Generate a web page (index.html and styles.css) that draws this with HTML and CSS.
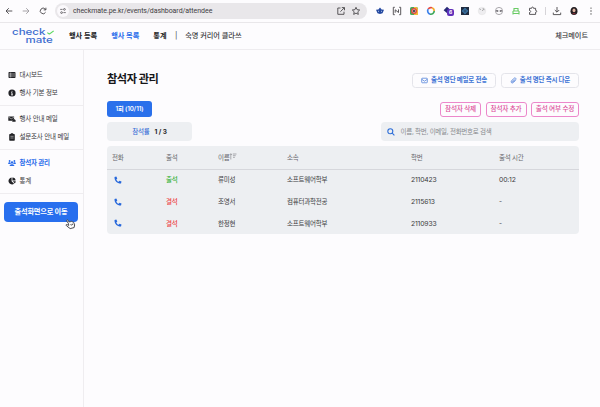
FILE: index.html
```html
<!DOCTYPE html>
<html lang="ko">
<head>
<meta charset="utf-8">
<title>참석자 관리</title>
<link rel="stylesheet" href="styles.css">
</head>
<body>
<div class="browser">
  <div class="controls">
    <svg viewBox="0 0 10 10"><path d="M8.3 5H2M4.8 2.2 2 5l2.8 2.8"/></svg>
    <svg class="muted" viewBox="0 0 10 10"><path d="M1.7 5H8M5.2 2.2 8 5 5.2 7.8"/></svg>
    <svg viewBox="0 0 10 10"><path d="M7.6 6.2A2.8 2.8 0 1 1 7.2 3.1L7.8 3.8M7.9 1.7v2.2H5.7"/></svg>
  </div>
  <div class="address">
    <span class="site"><svg viewBox="0 0 10 10"><path d="M1.5 3h3M5.5 7h3"/><circle cx="6.8" cy="3" r="1.1"/><circle cx="3.2" cy="7" r="1.1"/></svg></span>
    <span class="url">checkmate.pe.kr/events/dashboard/attendee</span>
    <svg viewBox="0 0 10 10"><path d="M4.5 2H1.8v6.3H8V5.7M5.8 1.6h2.7v2.7M8.3 1.8 4.4 5.7"/></svg>
    <svg viewBox="0 0 10 10"><path d="m5 1.3 1.1 2.4 2.6.3-1.9 1.8.5 2.6L5 7.1 2.7 8.4l.5-2.6L1.3 4l2.6-.3z"/></svg>
  </div>
  <div class="extensions">
    <svg viewBox="0 0 10 10"><path fill="#2448a0" stroke="none" d="m5 1.5 1.6 2 2.4.3-1.5 3.4-2.5.8-2.5-.8L1 3.8l2.4-.3z"/><path stroke="#bcd5f2" d="M3 5.3h1M6 5.3h1"/></svg>
    <svg viewBox="0 0 10 10"><path d="M2.8 1.3H1.3v7.4h1.5M7.2 1.3h1.5v7.4H7.2M3.2 6.7V3.8l3.3 2.7V3.4"/></svg>
    <svg viewBox="0 0 10 10"><rect x="1" y="1" width="8" height="8" rx="1.5" fill="#48a75b" stroke="none"/><path fill="#f1b93b" stroke="none" d="M5 1h2.5L9 2.5V9H5z"/><circle cx="5" cy="5" r="3" fill="#e5483f" stroke="none"/><circle cx="5" cy="5" r="1.5" fill="#392e36" stroke="#eee" stroke-width=".5"/></svg>
    <svg class="ring" viewBox="0 0 10 10"><path stroke="#e84a42" d="M2.2 3.1A3.3 3.3 0 0 1 6 1.8"/><path stroke="#f3ad31" d="M6 1.8A3.3 3.3 0 0 1 8.2 5"/><path stroke="#3da75b" d="M8.2 5A3.3 3.3 0 0 1 4 8.1"/><path stroke="#3e82ea" d="M4 8.1a3.3 3.3 0 0 1-1.8-5"/></svg>
    <span class="badged"><svg viewBox="0 0 10 10"><path fill="#272a76" stroke="none" d="m4 .8 3.8 3.4L4.5 7.6.6 4.3z"/></svg><b>6</b></span>
    <svg viewBox="0 0 10 10"><rect x="1" y="1" width="8" height="8" fill="#202c40" stroke="none"/><ellipse cx="5" cy="5" rx="3" ry="1.2" stroke="#438bc5" stroke-width=".7"/><ellipse cx="5" cy="5" rx="1.2" ry="3" stroke="#438bc5" stroke-width=".7"/></svg>
    <svg viewBox="0 0 10 10"><circle cx="5" cy="5" r="3.8" fill="#eeedf0" stroke="#ddd" stroke-width=".4"/><path stroke="#aaa" d="m2.2 2.7 1.8 1M5 5l2-2M5.5 2.8H7v1.5"/></svg>
    <svg viewBox="0 0 10 10"><circle cx="5" cy="5" r="3.6" stroke="#86848a" stroke-width=".7"/><path stroke="#77757a" d="M2 4.5h2v1H2.3M8 4.5H6v1h1.7"/></svg>
    <svg viewBox="0 0 10 10"><path stroke="#6acb65" stroke-width="1.1" d="M2.5 2.5h5M2 5h6M1.5 7.5h7M3 2v3M7 2v3M2 5v3.5M8 5v3.5"/></svg>
    <svg viewBox="0 0 10 10"><path d="M1.5 2.3h2.1c-.3-1.6 2.2-1.6 1.9 0h2.1v2.1c1.5-.3 1.5 2.1 0 1.8v2.2H1.5V6.5c1.6.2 1.6-2.2 0-2z"/></svg>
    <i></i>
    <svg viewBox="0 0 10 10"><path d="M5 1v5M2.8 4 5 6.2 7.2 4M1.3 6.6v2h7.4v-2"/></svg>
    <svg viewBox="0 0 10 10"><path fill="#211c20" stroke="none" d="M5 1c2.4 0 3.5 1.7 3.5 4.2S7.3 9 5 9 1.5 7.7 1.5 5.2 2.7 1 5 1z"/><ellipse cx="5" cy="4.4" rx="1.5" ry="1.8" fill="#dfb3a1" stroke="none"/><path stroke="#a3323f" d="M3.6 7.7h2.8"/></svg>
    <svg viewBox="0 0 10 10"><g fill="#444" stroke="none"><circle cx="5" cy="2.1" r=".7"/><circle cx="5" cy="5" r=".7"/><circle cx="5" cy="7.9" r=".7"/></g></svg>
  </div>
</div>

<header class="header">
  <div class="logo">
    <span>check<svg viewBox="0 0 8 6"><path d="m.8 3.2 2.1 1.9L7.4.8"/></svg></span>
    <span class="mate">mate</span>
  </div>
  <nav><b>행사 등록</b><b class="active">행사 목록</b><b>통계</b></nav>
  <span class="bar">|</span>
  <span class="event">숙명 커리어 클라쓰</span>
  <span class="account">체크메이트</span>
</header>

<div class="layout">
  <aside class="sidebar">
    <ul>
      <li><svg viewBox="0 0 8 8"><rect x=".5" y="1" width="7" height="6" rx=".8"/><path class="cut" d="M2.7 1.5v5M1 3h6M1 5h6"/></svg>대시보드</li>
      <li><svg viewBox="0 0 8 8"><circle cx="4" cy="4" r="3.6"/><path class="cut info" d="M3.3 3.6H4v2.2M3.2 5.9h1.7M4 1.9v.8"/></svg>행사 기본 정보</li>
    </ul>
    <ul>
      <li><svg viewBox="0 0 8 8"><path d="M.3 1.5h5.8v2.1L4 5.8H.3zM4.7 4.2h1.9l1 1.1v1.4H4.2z"/><path class="cut" d="m.5 2.2 2.8 1.6L6 2.2"/></svg>행사 안내 메일</li>
      <li><svg viewBox="0 0 8 8"><rect x="1.2" y="1" width="5.6" height="6.7" rx=".8"/><rect x="2.7" y=".2" width="2.6" height="1.5" rx=".5"/><path class="cut" d="M2.4 3.3h3.2M2.4 5h3.2"/></svg>설문조사 안내 메일</li>
    </ul>
    <ul>
      <li class="active"><svg viewBox="0 0 8 8"><circle cx="1.6" cy="2" r=".9"/><circle cx="6.4" cy="2" r=".9"/><circle cx="4" cy="3.4" r="1.2"/><path d="M.2 4.5c0-1.5 1.7-1.5 2.2-.8.1 1 .6 1.1.9 1.2H.2zM7.8 4.5c0-1.5-1.7-1.5-2.2-.8-.1 1-.6 1.1-.9 1.2h3.1zM1.6 7c0-2.2 4.8-2.2 4.8 0z"/></svg>참석자 관리</li>
      <li><svg viewBox="0 0 8 8"><path d="M3.6.5v3.7l2.5 2.6A3.5 3.5 0 1 1 3.6.5zM4.4.4a3.3 3.3 0 0 1 3.2 3.2H4.4zM4.9 4.3h2.8c0 1-.4 1.6-.9 2.1z"/></svg>통계</li>
    </ul>
    <button class="go">출석화면으로 이동</button>
    <svg class="pointer" viewBox="0 0 10 11"><path d="M3.2 5.3 1.5 2.6c-.4-.8.6-1.3 1.1-.6l1.3 1.8c.4-.7 1-.7 1.4-.3.4-.5 1-.4 1.3 0 .6-.3 1 0 1.3.6l.9 2.2-.5 2.5-3.6.9L1.4 7.2c-1-.9-.2-1.5.6-1.1l1.4.7zM5.3 5.5l.5 1.4M6.7 5.2l.5 1.3"/></svg>
  </aside>

  <main class="main">
    <div class="row heading">
      <h1>참석자 관리</h1>
      <div class="downloads">
        <button><svg viewBox="0 0 8 8"><rect x=".8" y="1.4" width="6.4" height="5.2" rx=".7"/><path d="M1 2.7 4 4.8l3-2.1"/></svg>출석 명단 메일로 전송</button>
        <button><svg viewBox="0 0 8 8"><path d="M6.2 3.7 3.8 6.3C2.4 7.8.3 6 1.7 4.4l2.9-3C5.8.3 7.6 1.7 6.5 3L3.9 5.7c-.8.7-1.7-.2-1-.9L5 2.6"/></svg>출석 명단 즉시 다운</button>
      </div>
    </div>
    <div class="row session">
      <button class="tab">1회 (10/11)</button>
      <div class="actions"><button>참석자 삭제</button><button>참석자 추가</button><button>출석 여부 수정</button></div>
    </div>
    <div class="row filters">
      <div class="rate"><span>참석률</span><b>1 / 3</b></div>
      <div class="search"><svg viewBox="0 0 8 8"><circle cx="3.3" cy="3.3" r="2.5"/><path d="m5.2 5.2 2.2 2.2"/></svg>이름, 학번, 이메일, 전화번호로 검색</div>
    </div>
    <div class="table">
      <div class="tr th"><span>전화</span><span>출석</span><span>이름<svg class="sort" viewBox="0 0 8 7"><path d="M1.8 6.5V.8M.5 2.1 1.8.7l1.3 1.4M3.8 1h3.7M4 2.7h2.7M4.1 4.4H5.8"/></svg></span><span>소속</span><span>학번</span><span>출석 시간</span></div>
      <div class="tr"><span><svg class="phone" viewBox="0 0 8 8"><path d="M.5 1 2.3.5l1 2-1 .9c.5 1.1 1.2 1.8 2.3 2.3l.9-1 2 .9L7 7.5C3.1 7.6.4 4.9.5 1z"/></svg></span><span class="yes">출석</span><span>류미성</span><span>소프트웨어학부</span><span class="num">2110423</span><span class="num">00:12</span></div>
      <div class="tr"><span><svg class="phone" viewBox="0 0 8 8"><path d="M.5 1 2.3.5l1 2-1 .9c.5 1.1 1.2 1.8 2.3 2.3l.9-1 2 .9L7 7.5C3.1 7.6.4 4.9.5 1z"/></svg></span><span class="no">결석</span><span>조영서</span><span>컴퓨터과학전공</span><span class="num">2115613</span><span>-</span></div>
      <div class="tr"><span><svg class="phone" viewBox="0 0 8 8"><path d="M.5 1 2.3.5l1 2-1 .9c.5 1.1 1.2 1.8 2.3 2.3l.9-1 2 .9L7 7.5C3.1 7.6.4 4.9.5 1z"/></svg></span><span class="no">결석</span><span>한정현</span><span>소프트웨어학부</span><span class="num">2110933</span><span>-</span></div>
    </div>
  </main>
</div>
</body>
</html>
```

FILE: styles.css
```css
* { box-sizing: border-box; }
body {
  margin: 0;
  height: 407px;
  display: flex;
  flex-direction: column;
  overflow: hidden;
  background: #fdfcfe;
  color: #3c3c3f;
  font: 6.5px/10px Inter, "Noto Sans CJK KR", sans-serif;
  letter-spacing: -.2px;
  white-space: nowrap;
}
svg { display: block; flex: none; fill: none; stroke-linejoin: round; }
button { font: inherit; letter-spacing: inherit; color: inherit; margin: 0; padding: 0; white-space: nowrap; }

.browser { height: 23px; flex: none; display: flex; align-items: center; border-bottom: 1px solid #e9e7ea; }
.browser svg { width: 10px; height: 10px; stroke: #48464a; stroke-width: .9; }
.controls { display: flex; gap: 7px; width: 55px; padding-left: 4px; }
.browser .muted { stroke: #9d9b9f; }
.address { width: 312px; height: 16px; border-radius: 8px; background: #e9e7ea; display: flex; align-items: center; gap: 5px; padding: 0 6px 0 2px; }
.site { width: 12px; height: 12px; border-radius: 50%; background: #fbf9fc; display: grid; place-items: center; }
.browser .site svg { width: 8px; height: 8px; }
.url { flex: 1; margin-left: -1px; color: #3f3d42; font: 7px/10px Roboto, sans-serif; letter-spacing: -.05px; }
.extensions { flex: 1; display: flex; align-items: center; gap: 7px; padding-left: 8px; }
.extensions i { width: 1px; height: 8px; background: #d6d4d8; margin: 0 -.5px; }
.extensions .ring path { stroke-width: 1.7; }
.badged { position: relative; }
.badged b { position: absolute; left: 4px; top: 3px; width: 7px; height: 7px; border-radius: 2px; background: #6030ba; color: #fff; font-size: 5px; line-height: 7px; text-align: center; letter-spacing: 0; }

.header { height: 27px; flex: none; display: flex; align-items: center; border-bottom: 1px solid #eeecef; padding: 0 12px; font-size: 7.2px; }
.logo { width: 57px; color: #3c6ccf; font: 500 9px/8.5px Inter, sans-serif; letter-spacing: 0; }
.logo span { display: flex; width: 40px; gap: 1px; transform: scaleX(1.28); transform-origin: 0 50%; }
.logo .mate { padding-left: 10.5px; }
.logo svg { width: 6px; height: 7px; stroke: #60da65; stroke-width: 1.3; margin-top: 1px; }
nav { display: flex; gap: 14px; color: #171719; letter-spacing: 0; }
nav .active, .sidebar .active { color: #286bea; }
.bar { margin: 0 8px 0 8.5px; }
.event, .account { font-weight: 500; letter-spacing: -.05px; }
.account { margin-left: auto; }

.layout { flex: 1; display: flex; }
.sidebar { width: 84px; flex: none; border-right: 1px solid #efedf0; padding-top: 12px; position: relative; }
.sidebar ul { list-style: none; margin: 0; padding: 4px 0 3px 7.5px; height: 44px; border-bottom: 1px solid #efedf0; }
.sidebar li { display: flex; align-items: center; gap: 4px; height: 18px; color: #38383b; font-weight: 400; }
.sidebar li svg { width: 8px; height: 8px; fill: #222226; }
.sidebar .cut { fill: none; stroke: #fff; stroke-width: .5; }
.sidebar .info { stroke-width: .9; }
.sidebar li.active { font-weight: 700; letter-spacing: -.2px; }
.sidebar .active svg { fill: #286bea; }
.go { display: block; width: 74px; height: 20px; margin: 8px 0 0 4px; border: 0; border-radius: 4px; background: #286fee; color: #fff; font-weight: 700; font-size: 7.2px; letter-spacing: -.2px; }
.pointer { position: absolute; left: 65px; top: 168px; width: 11px; height: 12px; fill: #fff; stroke: #313137; stroke-width: .8; }

.main { flex: 1; padding: 20px 21px 0 23px; }
.row { display: flex; justify-content: space-between; align-items: center; }
.heading { height: 20px; }
h1 { margin: 0; color: #161618; font-size: 11.2px; line-height: 16px; letter-spacing: -.45px; position: relative; top: -1px; }
.downloads, .actions { display: flex; gap: 5px; }
.downloads button { height: 15px; width: 84px; border: 1px solid #e4e4ea; border-radius: 3.5px; background: #fdfcfe; color: #3c73d5; font-size: 6.5px; font-weight: 700; display: flex; justify-content: center; align-items: center; gap: 3px; }
.downloads button + button { width: 78px; }
.downloads svg { width: 7px; height: 7px; stroke: #3c73d5; stroke-width: .8; }
.session { height: 16px; margin-top: 11px; }
.tab { width: 45px; height: 16px; border: 0; border-radius: 3px; color: #fff; background: #2a70eb; font-size: 6.2px; letter-spacing: -.08px; font-weight: 600; }
.actions { gap: 4.5px; }
.actions button { width: 41px; height: 15px; border: 1px solid #ec88cb; border-radius: 3px; background: #fdfcfe; color: #dc4f9b; font-weight: 500; font-size: 6.6px; }
.actions button:last-child { width: 48px; }
.filters { height: 19px; margin-top: 5px; }
.rate { width: 85px; height: 19px; border-radius: 4px; background: #edeff2; display: flex; justify-content: center; align-items: center; gap: 5px; }
.rate span { color: #3c70d7; font-weight: 500; }
.rate b { color: #222226; letter-spacing: -.05px; }
.search { width: 198px; height: 19px; border-radius: 4px; background: #edeff2; display: flex; align-items: center; gap: 5.5px; padding-left: 6px; color: #85878c; letter-spacing: -.27px; }
.search svg { width: 8px; height: 8px; stroke: #2e6ed8; stroke-width: 1.1; }

.table { margin-top: 5px; height: 88px; border-radius: 4px; background: #edeff2; padding-top: .5px; }
.tr { display: grid; grid-template-columns: 54px 52px 69px 124px 88px 1fr; align-items: center; height: 21.8px; padding-left: 5px; font-weight: 400; letter-spacing: -.25px; }
.th { height: 23px; border-bottom: 1px solid #d6d7dc; color: #66666b; }
.th span { display: flex; align-items: center; }
.sort { width: 8px; height: 7px; stroke: #8b8b90; stroke-width: .7; margin-top: -2px; }
.phone { width: 8px; height: 8px; margin-left: 2px; margin-top: -1px; fill: #2667db; }
.num { font-size: 6.8px; letter-spacing: -.16px; }
.yes, .no { font-weight: 500; }
.yes { color: #31b134; }
.no { color: #ee3f46; }
```
